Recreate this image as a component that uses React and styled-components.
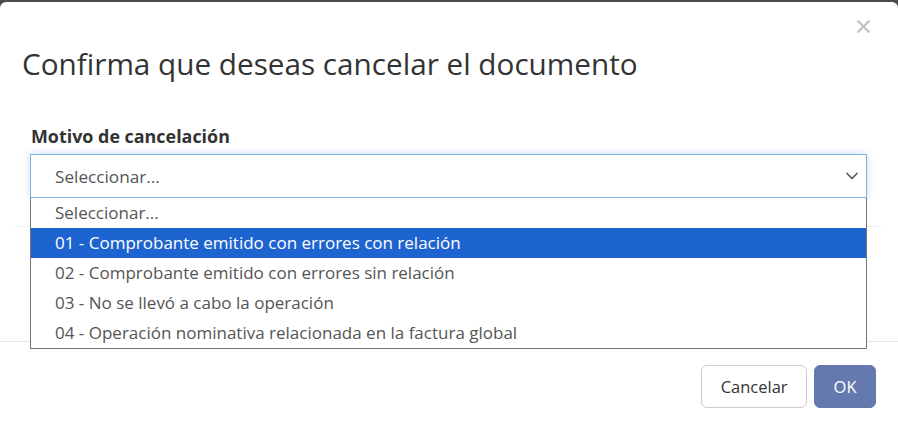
import React from 'react';
import styled, { createGlobalStyle } from 'styled-components';
import { ChevronDown, X } from 'lucide-react';

const GlobalStyle = createGlobalStyle`
  html, body {
    margin: 0;
    padding: 0;
    background: #4b4b4b;
    font-family: "Open Sans", "Liberation Sans", sans-serif;
  }
`;

const Modal = styled.div`
  margin-top: 2px;
  min-height: 426px;
  background: #fff;
  border-radius: 6px 6px 0 0;
  display: flex;
  flex-direction: column;
`;

const Header = styled.div`
  display: flex;
  flex-direction: column;
  padding: 14px 24px 0 22px;
`;

const CloseButton = styled.button`
  align-self: flex-end;
  display: flex;
  padding: 0;
  border: none;
  background: none;
  color: #c4c4c4;
  cursor: pointer;
`;

const Title = styled.h4`
  margin: 7px 0 0;
  font-size: 29.7px;
  line-height: 40px;
  font-weight: 400;
  color: #333;
`;

const Body = styled.div`
  padding: 42px 31px 114px 30px;
`;

const Label = styled.label`
  display: block;
  font-size: 17.9px;
  line-height: 20px;
  font-weight: 700;
  color: #333;
  margin-left: 1px;
  margin-bottom: 8px;
`;

const SelectWrap = styled.div`
  position: relative;
`;

const SelectBox = styled.div`
  height: 44px;
  box-sizing: border-box;
  display: flex;
  align-items: center;
  justify-content: space-between;
  padding: 0 4px 0 24px;
  border: 1px solid #80b3df;
  background: #fff;
  box-shadow: 0 0 8px rgba(102, 155, 233, 0.35);
  font-size: 17.2px;
  color: #555;
`;

const Options = styled.ul`
  position: absolute;
  top: 100%;
  left: 0;
  right: 0;
  margin: 0;
  padding: 0;
  list-style: none;
  background: #fff;
  border: 1px solid #767676;
  border-top: none;
  z-index: 2;
`;

const Option = styled.li`
  height: 30px;
  line-height: 30px;
  padding-left: 24px;
  font-size: 17px;
  color: ${p => (p.$active ? '#fff' : '#555')};
  background: ${p => (p.$active ? '#1e64d0' : 'transparent')};
`;

const Divider = styled.div`
  margin: 28px -15px 0;
  border-top: 1px solid #eee;
`;

const Footer = styled.div`
  display: flex;
  justify-content: flex-end;
  gap: 7px;
  padding: 23px 22px 20px;
  border-top: 1px solid #e5e5e5;
`;

const Button = styled.button`
  height: 43px;
  padding: 0 ${p => (p.$primary ? '18.5px' : '18.5px')};
  border-radius: 6px;
  font-family: inherit;
  font-size: 16.5px;
  border: 1px solid ${p => (p.$primary ? '#6479ad' : '#ccc')};
  background: ${p => (p.$primary ? '#6479ad' : '#fff')};
  color: ${p => (p.$primary ? '#fff' : '#333')};
  cursor: pointer;
`;

const motivos = [
  'Seleccionar...',
  '01 - Comprobante emitido con errores con relación',
  '02 - Comprobante emitido con errores sin relación',
  '03 - No se llevó a cabo la operación',
  '04 - Operación nominativa relacionada en la factura global',
];

export default function App() {
  return (
    <>
      <GlobalStyle />
      <Modal>
        <Header>
          <CloseButton aria-label="Cerrar">
            <X size={21} strokeWidth={2.8} />
          </CloseButton>
          <Title>Confirma que deseas cancelar el documento</Title>
        </Header>
        <Body>
          <Label>Motivo de cancelación</Label>
          <SelectWrap>
            <SelectBox>
              <span>Seleccionar...</span>
              <ChevronDown size={20} color="#555" strokeWidth={2} />
            </SelectBox>
            <Options>
              {motivos.map((m, i) => (
                <Option key={m} $active={i === 1}>{m}</Option>
              ))}
            </Options>
          </SelectWrap>
          <Divider />
        </Body>
        <Footer>
          <Button>Cancelar</Button>
          <Button $primary>OK</Button>
        </Footer>
      </Modal>
    </>
  );
}
